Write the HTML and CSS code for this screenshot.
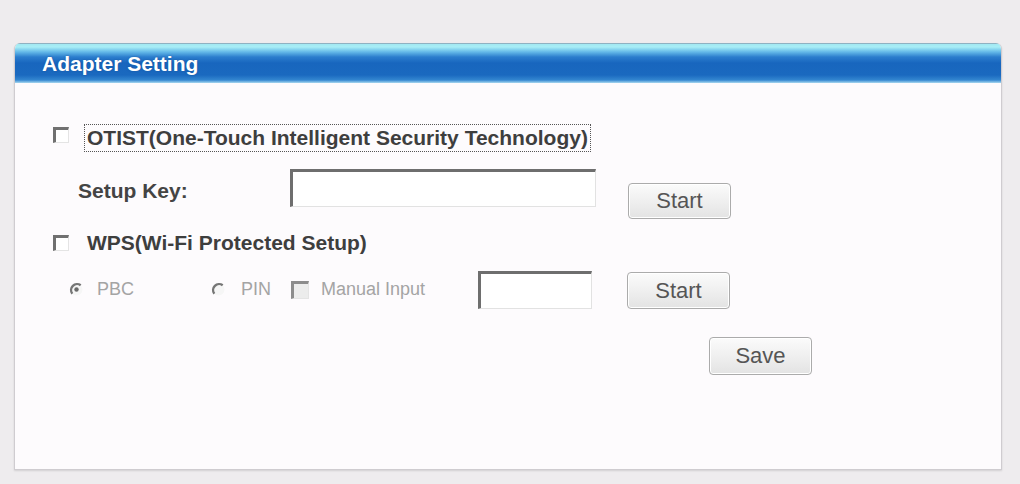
FILE: index.html
```html
<!DOCTYPE html>
<html lang="en">
<head>
  <meta charset="UTF-8">
  <meta name="viewport" content="width=device-width, initial-scale=1.0">
  <title>Adapter Setting</title>
  <link rel="stylesheet" href="styles.css">
</head>
<body>
  <div class="panel">
    <div class="panel-head">Adapter Setting</div>
    <div class="panel-body">

      <div class="row row-otist">
        <span class="check"></span>
        <span class="label focus">OTIST(One-Touch Intelligent Security Technology)</span>
      </div>

      <div class="row row-key">
        <span class="key-label">Setup Key:</span>
        <input class="field field-key" type="text">
        <button class="btn btn-key">Start</button>
      </div>

      <div class="row row-wps">
        <span class="check"></span>
        <span class="label">WPS(Wi-Fi Protected Setup)</span>
      </div>

      <div class="row row-mode">
        <span class="opt opt-pbc">
          <svg class="radio" width="15" height="15" viewBox="0 0 15 15">
            <circle cx="7.5" cy="7.5" r="6" fill="#f6f6f6"/>
            <path d="M11.7 3.3 A6 6 0 0 0 3.3 11.7" fill="none" stroke="#767676" stroke-width="2.4"/>
            <circle cx="7.5" cy="7.5" r="2.2" fill="#6a6a6a"/>
          </svg>
          <span class="opt-text">PBC</span>
        </span>
        <span class="opt opt-pin">
          <svg class="radio" width="15" height="15" viewBox="0 0 15 15">
            <circle cx="7.5" cy="7.5" r="6" fill="#f6f6f6"/>
            <path d="M11.7 3.3 A6 6 0 0 0 3.3 11.7" fill="none" stroke="#767676" stroke-width="2.4"/>
          </svg>
          <span class="opt-text">PIN</span>
        </span>
        <span class="opt opt-manual">
          <span class="check check-off"></span>
          <span class="opt-text">Manual Input</span>
        </span>
        <input class="field field-pin" type="text">
        <button class="btn btn-pin">Start</button>
      </div>

      <div class="row row-save">
        <button class="btn btn-save">Save</button>
      </div>

    </div>
  </div>
</body>
</html>
```

FILE: styles.css
```css
html, body {
  height: 100%;
}
body {
  font-family: "Liberation Sans", Arial, sans-serif;
  background-color: #eeecee;
  margin: 0;
  padding: 43px 18px 14px 14px;
  box-sizing: border-box;
  display: flex;
  flex-direction: column;
}
.panel {
  flex: 1;
  display: flex;
  flex-direction: column;
  background-color: #fdfbfd;
  border: 1px solid #cfccd0;
  border-top: none;
  border-radius: 6px 6px 0 0;
  box-shadow: 0 1px 2px rgba(0,0,0,0.12);
  overflow: hidden;
}
.panel-head {
  height: 39px;
  line-height: 39px;
  border-top: 1px solid #8fb2c2;
  padding-left: 27px;
  color: #fff;
  font-size: 21px;
  font-weight: bold;
  text-shadow: 0 0 2px rgba(20,60,120,0.5);
  background: linear-gradient(to bottom,
    #a2e8f2 0px, #a8eef6 3px, #63b8e8 8px, #2b7dcd 13px,
    #1866be 19px, #1a69bf 31px, #3386d0 36px, #a8d8f0 39px);
}
.panel-body {
  padding-left: 38px;
}
.row {
  display: flex;
  align-items: center;
}
.label {
  font-size: 21px;
  font-weight: bold;
  color: #3e3e3e;
}

/* classic sunken checkbox */
.check {
  width: 16px;
  height: 16px;
  box-sizing: border-box;
  border-top: 3px solid #707070;
  border-left: 3px solid #707070;
  border-right: 1px solid #e4e4e4;
  border-bottom: 1px solid #e4e4e4;
  background-color: #fff;
  flex-shrink: 0;
}
.check-off {
  width: 18px;
  height: 18px;
  border-top-color: #8c8c8c;
  border-left-color: #8c8c8c;
  background-color: #ececec;
}

.row-otist {
  margin-top: 41px;
  height: 28px;
  align-items: flex-start;
}
.row-otist .check {
  margin-top: 3px;
}
.row-otist .label {
  margin-left: 15px;
  line-height: 26px;
  padding: 0 2px;
  border: 1px dotted #555;
}

.row-key {
  margin-top: 17px;
  align-items: flex-start;
}
.key-label {
  width: 212px;
  margin-left: 25px;
  padding-top: 3px;
  line-height: 38px;
  font-size: 21px;
  font-weight: bold;
  color: #444;
}
.field {
  height: 38px;
  box-sizing: border-box;
  margin: 0;
  padding: 0;
  background-color: #fff;
  border-top: 3px solid #6e6e6e;
  border-left: 3px solid #6e6e6e;
  border-right: 1px solid #e2e2e2;
  border-bottom: 1px solid #e2e2e2;
  outline: none;
}
.field-key {
  width: 306px;
}

.btn {
  width: 103px;
  height: 36px;
  box-sizing: border-box;
  padding: 0;
  font-family: inherit;
  font-size: 22px;
  color: #555;
  border: 1px solid #ababab;
  border-radius: 4px;
  background: linear-gradient(to bottom, #fbfbfb, #ededed 60%, #e3e3e3);
  box-shadow: inset 0 0 0 1px #fff;
}
.btn-key {
  margin-left: 32px;
  margin-top: 14px;
}

.row-wps {
  margin-top: 13px;
  height: 22px;
}
.row-wps .label {
  margin-left: 18px;
  line-height: 22px;
}

.row-mode {
  margin-top: 16px;
  height: 39px;
}
.opt {
  display: flex;
  align-items: center;
  color: #a4a4a4;
  font-size: 18px;
}
.opt-pbc {
  width: 142px;
  margin-left: 16px;
}
.opt-pin {
  width: 80px;
}
.opt-manual {
  width: 187px;
}
.opt-pbc .opt-text {
  margin-left: 13px;
}
.opt-pin .opt-text {
  margin-left: 15px;
}
.opt-manual .opt-text {
  margin-left: 12px;
}
.radio {
  flex-shrink: 0;
}
.field-pin {
  width: 114px;
}
.btn-pin {
  margin-left: 35px;
  height: 37px;
  margin-top: 2px;
}

.row-save {
  margin-top: 28px;
}
.btn-save {
  margin-left: 656px;
  height: 38px;
}
```
